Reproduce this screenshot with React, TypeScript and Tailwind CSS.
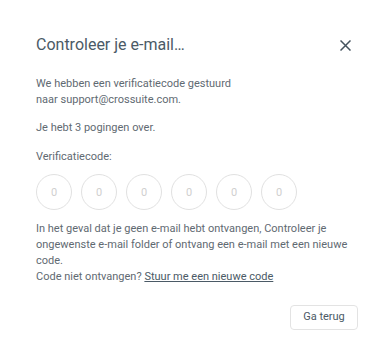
import { useState } from 'react'

const App = () => {
    const [code, setCode] = useState(['', '', '', '', '', ''])

    const setDigit = (i: number, v: string) => {
        const next = [...code]
        next[i] = v.slice(-1)
        setCode(next)
    }

    return (
        <div className="w-[369px] h-[340px] bg-white pl-[36px] pr-[11px] pt-[33px] font-['Roboto',sans-serif] text-[#5f6a72]">
            <div className="flex items-center justify-between pr-[5px]">
                <h1 className="text-[16px] leading-[24px] text-[#4b5a66]">Controleer je e-mail…</h1>
                <button className="w-[16px] h-[16px] flex items-center justify-center text-[#44535e]">
                    <svg width="11" height="11" viewBox="0 0 11 11" fill="none" stroke="currentColor" strokeWidth="1.5">
                        <path d="M0.5 0.5L10.5 10.5M10.5 0.5L0.5 10.5" />
                    </svg>
                </button>
            </div>

            <p className="mt-[19px] text-[11px] leading-[16px]">
                We hebben een verificatiecode gestuurd
                <br />
                naar support@crossuite.com.
            </p>
            <p className="mt-[12px] text-[11px] leading-[16px]">Je hebt 3 pogingen over.</p>

            <label className="block mt-[13px] text-[11px] leading-[16px]">Verificatiecode:</label>
            <div className="mt-[9px] flex gap-[9px]">
                {code.map((c, i) => (
                    <input
                        key={i}
                        value={c}
                        onChange={(e) => setDigit(i, e.target.value)}
                        placeholder="0"
                        className="w-[36px] h-[36px] rounded-full border border-[#e1e1e1] text-center text-[11px] text-[#5f6a72] placeholder:text-[#cfcfcf] outline-none"
                    />
                ))}
            </div>

            <p className="mt-[11px] text-[11px] leading-[16px] pr-[10px]">
                In het geval dat je geen e-mail hebt ontvangen, Controleer je ongewenste e-mail folder of ontvang een e-mail met een nieuwe code.
                <br />
                Code niet ontvangen? <a href="#" className="underline text-[#4b5a66]">Stuur me een nieuwe code</a>
            </p>

            <div className="mt-[20px] flex justify-end">
                <button className="w-[68px] h-[25px] rounded-[4px] border border-[#e3e3e3] text-[11px] text-[#4b5a66]">Ga terug</button>
            </div>
        </div>
    )
}

export default App
